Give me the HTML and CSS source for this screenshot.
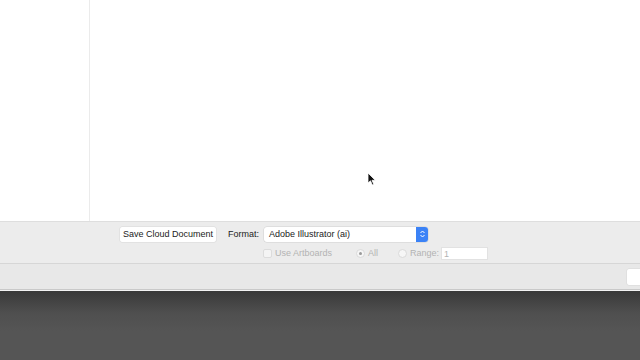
FILE: index.html
```html
<!DOCTYPE HTML>
<html>
<head>
<meta charset="utf-8">
<title>Save</title>
<link rel="stylesheet" href="styles.css">
</head>
<body>
<div class="canvas">
	<div class="sidebar"></div>
	<div class="main">
		<svg class="cursor" width="10" height="14" viewBox="0 0 10 14"><path d="M1 1 L1 11 L3.5 8.8 L5.3 13 L6.8 12.3 L5 8.3 L8.3 8.3 Z" fill="#111" stroke="#fff" stroke-width="0.8"/></svg>
	</div>
</div>
<div class="options">
	<div class="row">
		<span class="btn">Save Cloud Document</span>
		<span class="label">Format:</span>
		<span class="popup">Adobe Illustrator (ai)<i class="stepper"><svg width="7" height="10" viewBox="0 0 7 10"><path d="M1.5 4 L3.5 2 L5.5 4 M1.5 6 L3.5 8 L5.5 6" fill="none" stroke="#fff" stroke-width="1"/></svg></i></span>
	</div>
	<div class="row row2">
		<span class="check"></span><span class="dim artboards">Use Artboards</span>
		<span class="radio on"></span><span class="dim all">All</span>
		<span class="radio"></span><span class="dim range">Range:</span>
		<span class="field">1</span>
	</div>
</div>
<div class="footer">
	<span class="btn cut"></span>
</div>
<div class="dock"></div>
</body>
</html>
```

FILE: styles.css
```css
* {margin:0; padding:0; box-sizing:border-box;}
body{
	width:640px;
	height:360px;
	overflow:hidden;
	font-family:"Liberation Sans", Arial, sans-serif;
	font-size:9px;
	color:#222;
	background:#fff;
}
.canvas{display:flex; height:221px;}
.sidebar{width:90px; border-right:1px solid #ebebeb; background:#fff;}
.main{flex:1; position:relative; background:#fff;}
.cursor{position:absolute; left:277px; top:172px;}

.options{
	height:43px;
	background:#ececec;
	border-top:1px solid #dedede;
	border-bottom:1px solid #d6d6d6;
	padding-top:4px;
}
.row{display:flex; align-items:center; height:16px;}
.btn{
	margin-left:120px;
	width:96px;
	height:15px;
	line-height:15px;
	background:#fff;
	text-align:center;
	box-shadow:0 0 0 0.5px #d8d8d8;
	border-radius:2px;
}
.label{margin-left:12px; width:36px;}
.popup{
	width:164px;
	height:15px;
	line-height:15px;
	padding-left:5px;
	background:#fff;
	border-radius:3px;
	box-shadow:0 0 0 0.5px #d0d0d0;
	display:flex;
	justify-content:space-between;
}
.stepper{
	width:12px;
	height:15px;
	background:#3b82f6;
	border-radius:0 3px 3px 0;
	display:flex;
	align-items:center;
	justify-content:center;
}
.row2{margin-top:4px; height:14px;}
.check{
	margin-left:263px;
	width:9px; height:9px;
	background:#f4f4f4;
	border:1px solid #dcdcdc;
	border-radius:2px;
}
.dim{color:#b3b3b3; margin-left:3px;}
.artboards{width:81px;}
.all{width:30px;}
.range{width:31px;}
.radio{
	width:9px; height:9px;
	border-radius:50%;
	background:#f6f6f6;
	border:1px solid #dadada;
	display:flex; align-items:center; justify-content:center;
}
.radio.on::after{content:""; width:3px; height:3px; border-radius:50%; background:#9a9a9a;}
.field{
	width:47px;
	height:13px;
	line-height:13px;
	background:#fff;
	border:1px solid #e2e2e2;
	color:#b3b3b3;
	padding-left:2px;
}

.footer{
	height:26px;
	background:#e8e8e8;
	border-bottom:1px solid #c9c9c9;
	display:flex;
	justify-content:flex-end;
	align-items:center;
}
.btn.cut{margin-left:0; width:13px; height:16px; border-radius:2px 0 0 2px;}
.dock{
	height:70px;
	border-top:1px solid #f4f4f4;
	background:linear-gradient(#393939, #4f4f4f 22px, #555 40px, #555);
}
```
